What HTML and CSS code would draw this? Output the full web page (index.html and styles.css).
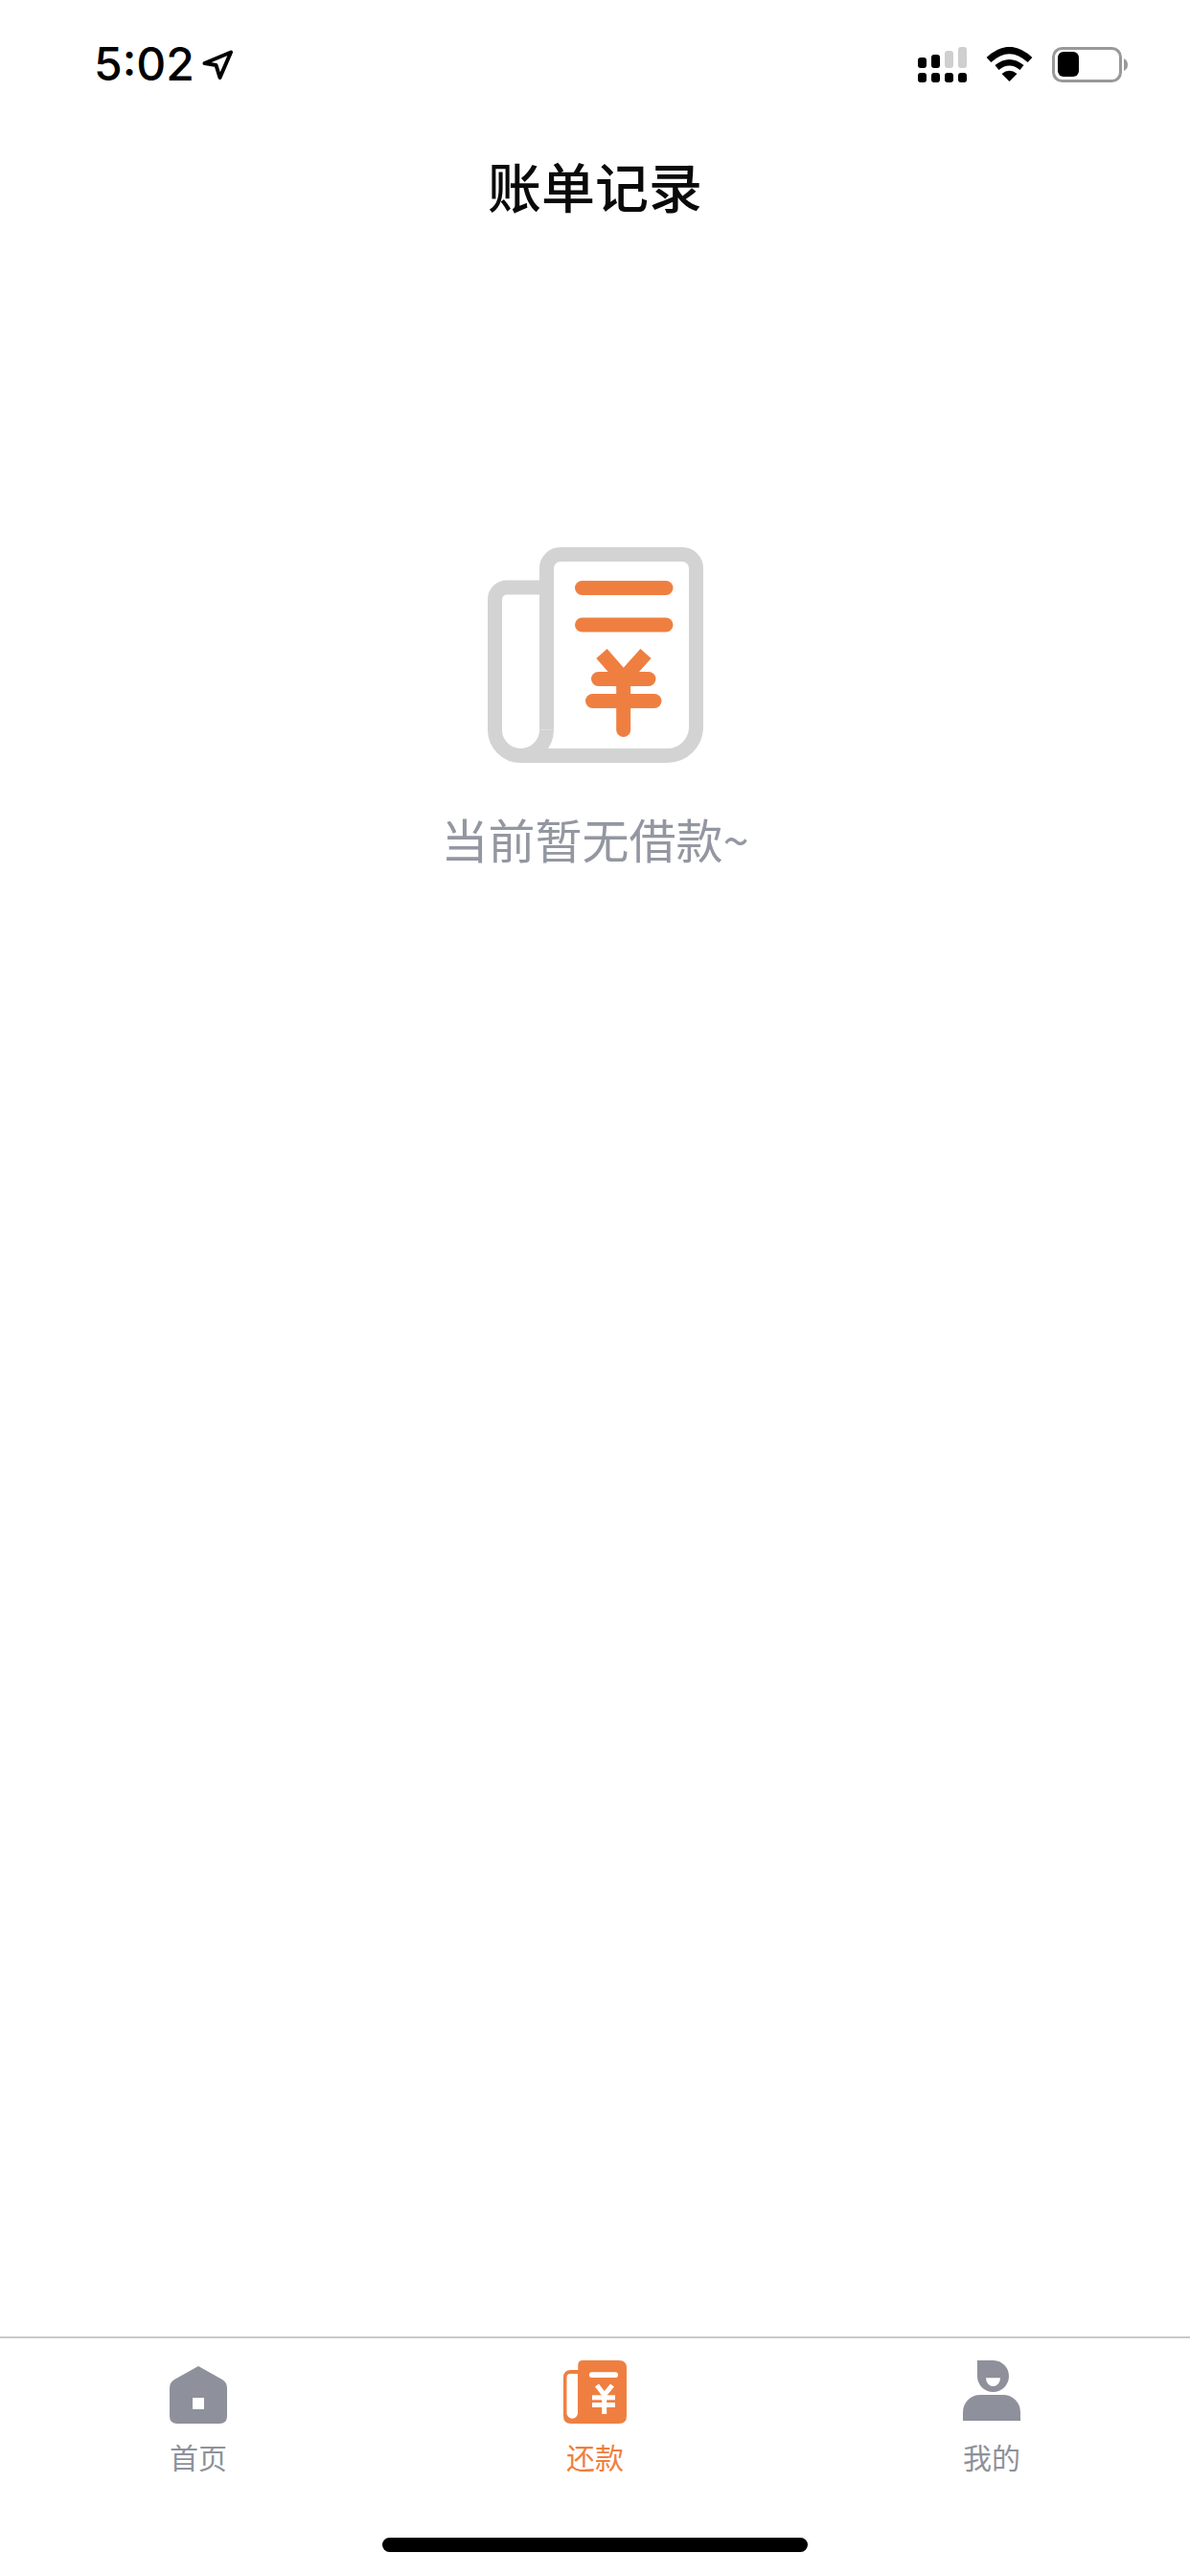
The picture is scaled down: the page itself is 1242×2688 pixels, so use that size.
FILE: index.html
```html
<!DOCTYPE html>
<html lang="zh-CN">
<head>
    <meta charset="UTF-8">
    <meta name="viewport" content="width=device-width, initial-scale=1.0">
    <title>账单记录</title>
    <link rel="stylesheet" href="styles.css">
</head>
<body>
    <div class="page">
        <div class="status-bar">
            <div class="status-left">
                <span class="time">5:02</span>
                <svg class="loc-arrow" width="32" height="31" viewBox="0 0 32 31">
                    <path d="M2.500 14 L30 2.500 L18.500 29 L14.500 16 Z" fill="none" stroke="#000" stroke-width="4" stroke-linejoin="round"/>
                </svg>
            </div>
            <div class="status-right">
                <svg width="51" height="37" viewBox="0 0 51 37">
                    <g fill="#000">
                        <rect x="0" y="27" width="9" height="10" rx="3"/>
                        <rect x="14" y="27" width="9" height="10" rx="3"/>
                        <rect x="28" y="27" width="9" height="10" rx="3"/>
                        <rect x="42" y="27" width="9" height="10" rx="3"/>
                        <rect x="0" y="11" width="9" height="11" rx="3"/>
                        <rect x="14" y="8" width="9" height="14" rx="3"/>
                    </g>
                    <g fill="#cfcfcf">
                        <rect x="28" y="4" width="9" height="18" rx="3"/>
                        <rect x="42" y="0" width="9" height="22" rx="3"/>
                    </g>
                </svg>
                <svg width="49" height="36" viewBox="0 0 49 36">
                    <path d="M3 13.500 Q24.500 -6.500 46 13.500" fill="none" stroke="#000" stroke-width="7"/>
                    <path d="M11.500 21.500 Q24.500 11 37.500 21.500" fill="none" stroke="#000" stroke-width="6.500"/>
                    <path d="M24.500 36 L16.500 28 Q24.500 21.500 32.500 28 Z" fill="#000"/>
                </svg>
                <svg width="79" height="37" viewBox="0 0 79 37">
                    <rect x="1.500" y="1.500" width="70" height="34" rx="9" fill="none" stroke="#999" stroke-width="3"/>
                    <rect x="6" y="5" width="22" height="26" rx="6" fill="#000"/>
                    <path d="M75 12 Q79 14 79 18.500 Q79 23 75 25 Z" fill="#999"/>
                </svg>
            </div>
        </div>

        <div class="nav-bar">账单记录</div>

        <div class="content">
            <svg class="empty-icon" width="225" height="225" viewBox="0 0 225 225">
                <g fill="none" stroke="#d3d3d3" stroke-width="15">
                    <path d="M61.500 190.500 V22 a14.500 14.500 0 0 1 14.500 -14.500 H203 a14.500 14.500 0 0 1 14.500 14.500 V187.500 a30 30 0 0 1 -30 30 H34.500"/>
                    <path d="M61.500 42 H20 a12.500 12.500 0 0 0 -12.500 12.500 V190.500 a27 27 0 0 0 54 0"/>
                </g>
                <g fill="none" stroke="#ef7f40" stroke-width="15" stroke-linecap="round">
                    <path d="M98.500 42.500 H186"/>
                    <path d="M98.500 81 H186"/>
                    <path d="M115.500 137.500 H168"/>
                    <path d="M109.500 160.500 H174"/>
                    <path d="M141.700 160 V190.500"/>
                </g>
                <path d="M119 111 L141.700 137 V160 M141.700 137 L165 111" fill="none" stroke="#ef7f40" stroke-width="15"/>
            </svg>
            <p class="empty-text">当前暂无借款~</p>
        </div>

        <div class="tab-bar">
            <div class="tabs">
                <div class="tab">
                    <svg class="tab-icon" width="60" height="66" viewBox="0 0 60 66">
                        <path d="M30 6 L55 20 Q60 23 60 29 V58 Q60 66 52 66 H8 Q0 66 0 58 V29 Q0 23 5 20 Z" fill="#8e919b"/>
                        <rect x="24" y="39" width="12" height="12" fill="#fff"/>
                    </svg>
                    <span class="tab-label">首页</span>
                </div>
                <div class="tab tab-active">
                    <svg class="tab-icon" width="66" height="66" viewBox="0 0 66 66">
                        <path d="M20 0 H58 Q66 0 66 8 V58 Q66 66 58 66 H8 Q0 66 0 58 V18 Q0 10 8 10 H15.300 V5 Q15.300 0 20 0 Z" fill="#ef7f40"/>
                        <path d="M3.500 18 Q3.500 14 7 14 H15 V55 a5.700 5.700 0 0 1 -11.500 0 Z" fill="#fff"/>
                        <rect x="27" y="12.300" width="30" height="5.700" rx="2.800" fill="#fff"/>
                        <g fill="none" stroke="#fff" stroke-width="5">
                            <path d="M35 26 L42.700 36 L51 26"/>
                            <path d="M30 38.800 H54"/>
                            <path d="M30 46.500 H54"/>
                            <path d="M42.700 36 V56"/>
                        </g>
                    </svg>
                    <span class="tab-label">还款</span>
                </div>
                <div class="tab">
                    <svg class="tab-icon" width="60" height="66" viewBox="0 0 60 66">
                        <path d="M15 0 H32 a16.500 16.500 0 0 1 16 16.500 a16.500 16.500 0 0 1 -33 0 Z" fill="#8e919b"/>
                        <path d="M24 18.300 H39 a7.500 8.700 0 0 1 -15 0 Z" fill="#fff"/>
                        <path d="M0 63 V54 a18 18 0 0 1 18 -18 H42 a18 18 0 0 1 18 18 V63 Z" fill="#8e919b"/>
                    </svg>
                    <span class="tab-label">我的</span>
                </div>
            </div>
            <div class="home-bar"></div>
        </div>
    </div>
</body>
</html>
```

FILE: styles.css
```css
body {
    margin: 0;
    background: #fff;
    font-family: "Noto Sans CJK SC", "Noto Sans", sans-serif;
}
.page {
    display: flex;
    flex-direction: column;
    height: 2688px;
    overflow: hidden;
}
.status-bar {
    display: flex;
    justify-content: space-between;
    align-items: center;
    height: 134px;
    padding: 0 65px 0 98px;
    flex-shrink: 0;
}
.status-left {
    display: flex;
    align-items: center;
    gap: 8px;
}
.status-right {
    display: flex;
    align-items: center;
    gap: 20px;
}
.time {
    font-family: Inter, "Liberation Sans", sans-serif;
    font-size: 48px;
    font-weight: 500;
    line-height: 50px;
    color: #000;
}
.nav-bar {
    height: 118px;
    padding-bottom: 6px;
    line-height: 118px;
    text-align: center;
    font-size: 56px;
    font-weight: 500;
    color: #0a0a0a;
    flex-shrink: 0;
}
.content {
    flex: 1;
    display: flex;
    flex-direction: column;
    align-items: center;
    padding-top: 313px;
}
.empty-icon {
    display: block;
}
.empty-text {
    margin: 42px 0 0;
    font-size: 49px;
    line-height: 74px;
    color: #9397a1;
}
.tab-bar {
    height: 250px;
    border-top: 2px solid #c8c8cc;
    box-sizing: border-box;
    display: flex;
    flex-direction: column;
    align-items: center;
    flex-shrink: 0;
}
.tabs {
    display: grid;
    grid-template-columns: repeat(3, 1fr);
    width: 100%;
    padding-top: 23px;
}
.tab {
    display: flex;
    flex-direction: column;
    align-items: center;
    color: #8e919b;
}
.tab-active {
    color: #ef7f40;
}
.tab-icon {
    display: block;
}
.tab-label {
    margin-top: 12px;
    font-size: 30px;
    line-height: 44px;
}
.home-bar {
    width: 444px;
    height: 15px;
    margin-top: 63px;
    border-radius: 8px;
    background: #000;
}
```
